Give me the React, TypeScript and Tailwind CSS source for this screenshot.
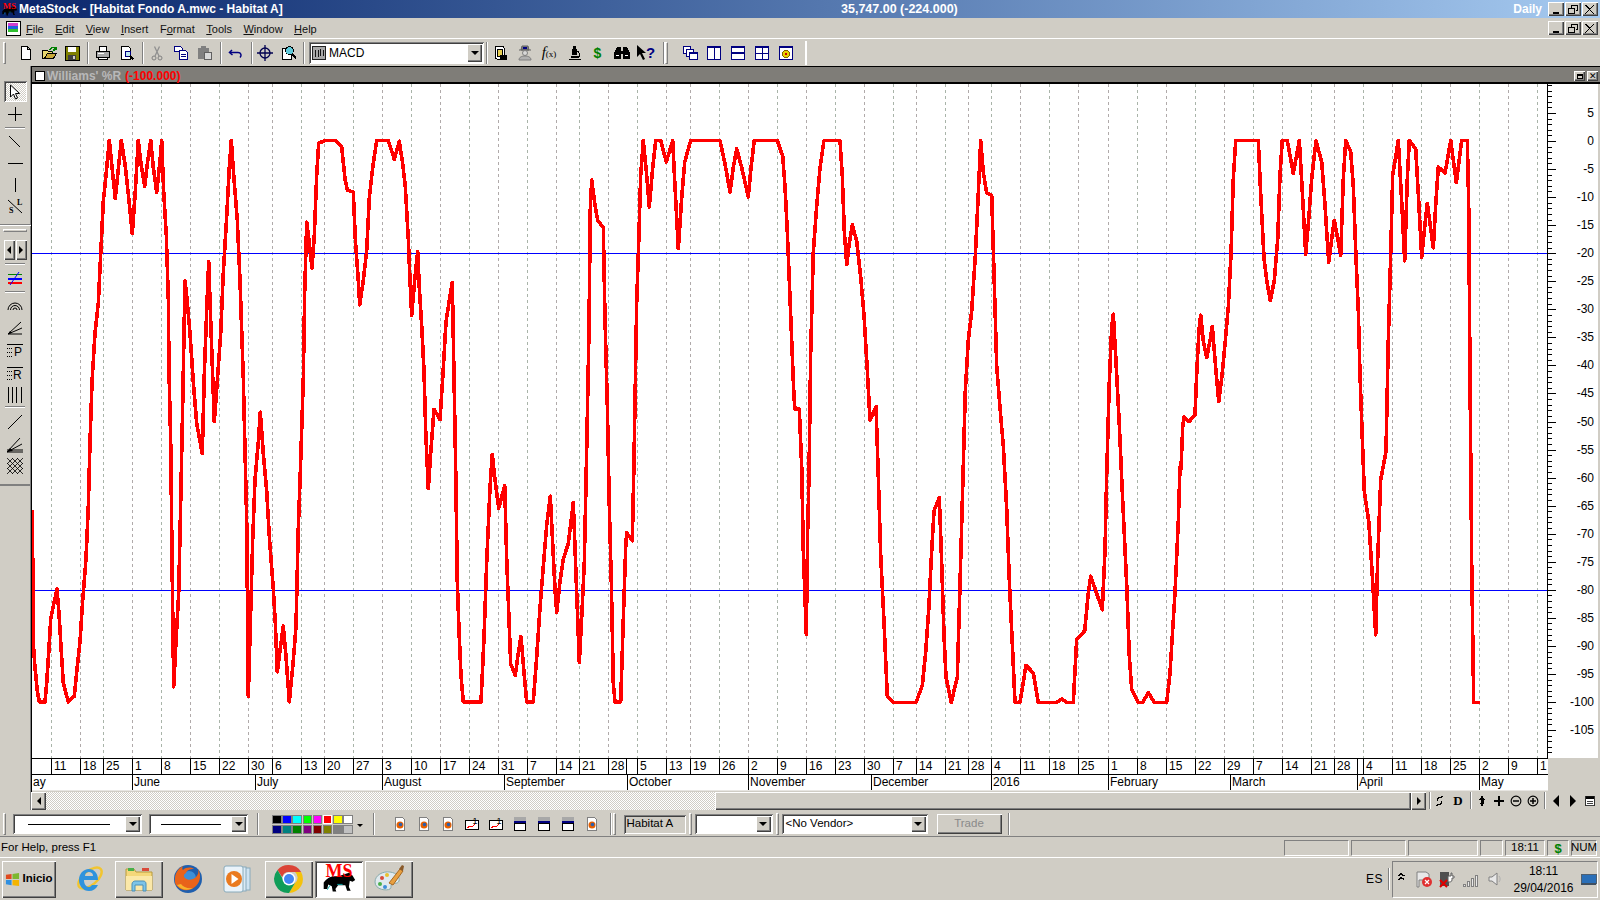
import type { ReactNode } from "react";

const raised = "shadow-[inset_1px_1px_0_#ffffff,inset_-1px_-1px_0_#404040,inset_-2px_-2px_0_#808080]";
const sunken = "shadow-[inset_1px_1px_0_#808080,inset_-1px_-1px_0_#ffffff,inset_2px_2px_0_#404040]";
const thinSunken = "border border-t-[#808080] border-l-[#808080] border-b-white border-r-white";

// curve read from the crops: x,y in zoomed pixels, mapped back to page pixels
const trace = (ox: number, k: number, pts: number[][]) => pts.map(([x, y]) => `${(ox + x / 3).toFixed(1)},${(130 + y / k).toFixed(1)}`).join(" ");

const curve = [
  trace(30, 2.658, [[7, 1010], [8, 1125], [9, 1350], [14, 1420], [22, 1490], [28, 1520], [45, 1520], [50, 1470], [56, 1390], [62, 1300], [70, 1265], [81, 1220], [87, 1285], [92, 1360], [100, 1470], [115, 1520], [133, 1505], [140, 1440], [150, 1360], [158, 1250], [168, 1140], [175, 1000], [180, 830], [186, 670], [195, 540], [205, 460], [212, 330], [220, 190], [228, 120], [238, 28], [245, 90], [256, 182], [263, 120], [274, 28], [285, 90], [296, 180], [307, 275], [315, 175], [325, 28], [333, 90], [344, 150], [352, 90], [362, 28], [370, 100], [380, 165], [389, 90], [395, 28], [401, 165], [409, 280], [415, 450], [417, 640], [422, 830], [427, 1200], [431, 1480], [438, 1360], [446, 1230], [452, 990], [458, 730], [465, 400], [470, 440], [480, 540], [490, 670], [500, 780], [517, 860], [523, 650], [530, 480], [536, 350], [543, 530], [553, 775], [560, 690], [572, 540], [580, 380], [590, 230], [598, 100], [604, 28], [612, 130], [622, 240], [630, 400], [640, 660], [645, 850], [650, 1040], [655, 1505], [662, 1280], [668, 1090], [675, 930], [685, 830], [691, 750], [700, 860], [710, 960], [718, 1080], [730, 1220], [736, 1310], [742, 1440], [752, 1370], [760, 1318], [768, 1400], [778, 1520], [790, 1410], [798, 1320], [805, 1060], [812, 880], [820, 660], [824, 430], [830, 245], [838, 300], [846, 368], [853, 280], [860, 120], [866, 35], [885, 28], [917, 28], [935, 45], [945, 130], [952, 160], [970, 165], [976, 290], [985, 400], [989, 465], [1000, 400], [1010, 320], [1018, 180], [1028, 100], [1040, 28], [1075, 28], [1093, 78], [1108, 30], [1118, 90], [1126, 150], [1135, 290], [1140, 400], [1145, 492], [1155, 390], [1163, 323]]),
  trace(410, 2.658, [[28, 420], [35, 520], [42, 640], [47, 800], [55, 953], [62, 860], [72, 742], [90, 770], [98, 660], [108, 510], [120, 440], [127, 405], [133, 700], [137, 900], [142, 1200], [147, 1330], [153, 1450], [160, 1520], [213, 1520], [222, 1350], [230, 1150], [240, 950], [247, 862], [255, 930], [266, 1005], [284, 945], [290, 1140], [297, 1300], [302, 1420], [316, 1450], [325, 1390], [333, 1346], [340, 1420], [350, 1520], [370, 1520], [380, 1400], [390, 1270], [400, 1160], [410, 1050], [421, 973], [428, 1100], [435, 1220], [440, 1282], [450, 1200], [460, 1140], [475, 1100], [483, 1040], [490, 990], [497, 1160], [503, 1300], [508, 1415], [516, 1280], [523, 1150], [530, 850], [537, 530], [541, 210], [545, 133], [555, 200], [563, 240], [580, 260], [585, 500], [592, 730], [598, 1000], [604, 1200], [610, 1470], [615, 1520], [632, 1520], [640, 1300], [647, 1110], [650, 1070], [667, 1092], [672, 880], [680, 460], [686, 300], [692, 120], [700, 28], [708, 100], [718, 205], [728, 100], [737, 28], [752, 28], [769, 85], [788, 28], [795, 150], [805, 315], [815, 180], [824, 85], [842, 28], [930, 28], [945, 90], [960, 165], [970, 100], [980, 50], [995, 100], [1015, 178], [1023, 100], [1033, 28], [1102, 28], [1118, 70], [1125, 150], [1132, 270], [1138, 400], [1145, 560], [1152, 710], [1155, 742], [1168, 742]]),
  trace(790, 2.376, [[35, 800], [40, 1000], [49, 1198], [53, 950], [57, 820], [62, 530], [70, 290], [80, 180], [90, 90], [102, 25], [150, 25], [157, 110], [163, 240], [170, 320], [178, 270], [187, 225], [200, 265], [212, 350], [222, 440], [232, 570], [240, 690], [258, 657], [264, 800], [272, 1010], [282, 1170], [292, 1345], [310, 1360], [378, 1360], [397, 1320], [407, 1240], [416, 1140], [425, 1000], [432, 905], [448, 873], [455, 1030], [462, 1200], [468, 1300], [484, 1360], [502, 1300], [510, 1080], [518, 850], [526, 620], [535, 500], [545, 430], [556, 300], [565, 150], [572, 25], [580, 100], [590, 150], [605, 155], [612, 340], [620, 560], [630, 660], [640, 750], [650, 900], [658, 1070], [668, 1240], [675, 1360], [690, 1360], [708, 1272], [730, 1290], [745, 1360], [800, 1360], [815, 1352], [830, 1360], [850, 1360], [860, 1210], [884, 1190], [895, 1100], [902, 1060], [937, 1140], [945, 1000], [950, 820], [958, 600], [965, 470], [970, 438], [978, 550], [988, 700], [998, 880], [1010, 1080], [1018, 1250], [1025, 1330], [1045, 1360], [1058, 1360], [1075, 1337], [1093, 1360], [1130, 1360], [1140, 1290], [1155, 1100], [1165, 930], [1170, 800]]),
  trace(1170, 2.658, [[33, 900], [38, 790], [42, 762], [57, 775], [75, 758], [80, 650], [87, 530], [92, 492], [100, 560], [110, 605], [120, 560], [127, 522], [135, 610], [146, 722], [155, 660], [165, 570], [175, 470], [183, 330], [190, 130], [197, 28], [265, 28], [272, 170], [282, 340], [290, 400], [301, 453], [313, 400], [323, 290], [330, 120], [337, 28], [352, 28], [370, 115], [388, 28], [396, 150], [407, 330], [415, 250], [425, 130], [438, 28], [455, 85], [465, 200], [476, 352], [485, 290], [493, 240], [512, 333], [520, 130], [527, 28], [542, 58], [550, 150], [558, 340], [565, 480], [570, 650], [577, 820], [583, 960], [596, 1040], [606, 1170], [617, 1342], [623, 1140], [632, 930], [648, 855], [655, 560], [662, 330], [668, 120], [685, 28], [695, 190], [704, 348], [712, 130], [718, 28], [737, 50], [745, 170], [755, 338], [765, 250], [772, 195], [790, 313], [797, 200], [805, 98], [825, 115], [842, 28], [859, 140], [875, 28], [892, 28], [896, 200], [900, 650], [905, 1150], [911, 1522], [930, 1522]]),
].join(" ");

const dates: [number, string][] = [[32, ""], [51, "11"], [80, "18"], [103, "25"], [132, "1"], [161, "8"], [190, "15"], [219, "22"], [248, "30"], [272, "6"], [301, "13"], [324, "20"], [353, "27"], [382, "3"], [411, "10"], [440, "17"], [469, "24"], [498, "31"], [527, "7"], [556, "14"], [579, "21"], [608, "28"], [626, ""], [637, "5"], [666, "13"], [690, "19"], [719, "26"], [748, "2"], [777, "9"], [806, "16"], [835, "23"], [864, "30"], [893, "7"], [916, "14"], [945, "21"], [968, "28"], [991, "4"], [1020, "11"], [1049, "18"], [1078, "25"], [1108, "1"], [1137, "8"], [1166, "15"], [1195, "22"], [1224, "29"], [1253, "7"], [1282, "14"], [1311, "21"], [1334, "28"], [1357, ""], [1363, "4"], [1392, "11"], [1421, "18"], [1450, "25"], [1479, "2"], [1508, "9"], [1537, "1"], [1547, ""]];
const months: [number, string][] = [[32, "ay"], [132, "June"], [255, "July"], [382, "August"], [504, "September"], [627, "October"], [748, "November"], [871, "December"], [991, "2016"], [1108, "February"], [1230, "March"], [1357, "April"], [1479, "May"], [1548, ""]];
const gridX = dates.filter((d) => d[1] !== "").map((d) => d[0]);

const axisY = (v: number) => 141 - v * 5.61;
const axisLabels = Array.from({ length: 23 }, (_, i) => 5 - i * 5);
const minorTicks = Array.from({ length: 120 }, (_, i) => 84 + ((141 - 84) % 5.61) + i * 5.61).filter((y) => y < 758);

const Ico = ({ children, s = 16, box = 16, crisp = true }: { children: ReactNode; s?: number; box?: number; crisp?: boolean }) => (
  <svg width={s} height={s} viewBox={`0 0 ${box} ${box}`} shapeRendering={crisp ? "crispEdges" : "geometricPrecision"} className="shrink-0">
    {children}
  </svg>
);

const Sep = ({ cls = "mx-[2px]" }: { cls?: string }) => <div className={`w-[2px] h-[22px] border-l border-l-[#808080] border-r border-r-white shrink-0 ${cls}`} />;
const Grip = ({ cls = "" }: { cls?: string }) => <div className={`w-[3px] h-[22px] border border-t-white border-l-white border-r-[#808080] border-b-[#808080] shrink-0 ${cls}`} />;

const ArrowDown = () => <div className="w-0 h-0 border-l-[4px] border-r-[4px] border-t-[4px] border-l-transparent border-r-transparent border-t-black" />;

const Combo = ({ w, children }: { w: string; children?: ReactNode }) => (
  <div className={`${w} ${sunken} h-[20px] bg-white flex items-center pl-[4px] pr-[2px] shrink-0`}>
    <div className="flex-1 flex items-center min-w-0">{children}</div>
    <div className={`${raised} w-[15px] h-[16px] bg-[#d0cdc5] flex items-center justify-center`}><ArrowDown /></div>
  </div>
);

const CapBtn = ({ kind }: { kind: "min" | "max" | "close" }) => (
  <div className={`${raised} w-[16px] h-[14px] bg-[#d0cdc5] flex items-center justify-center shrink-0`}>
    <svg width="10" height="9" viewBox="0 0 10 9" shapeRendering="crispEdges">
      {kind === "min" && <rect x="2" y="7" width="6" height="2" fill="#000" />}
      {kind === "max" && <path d="M3.500 2.500V.5h6v5h-2M.5 3.500h6v5h-6zM.5 3.500h6" fill="none" stroke="#000" />}
      {kind === "close" && <path d="M1 0l3.500 3.500L8 0h1.500L5.300 4.500 9.500 9H8L4.500 5.300 1 9H0l3.700-4.500L0 0z" fill="#000" />}
    </svg>
  </div>
);

const LogoBull = ({ s }: { s: number }) => (
  <svg width={s} height={s} viewBox="0 0 40 36" className="shrink-0">
    <path d="M3 22c3-4 7-7 12-7 6 0 12-3 16-4l4 3 3 5-3 2-3-1-1 7 2 4h-4l-2-6-8 0-3 4 1 3h-4l-1-6-4-2-1 5H3z" fill="#000" />
    <path d="M7 30l3-5M18 24h6" stroke="#0aa" strokeWidth="1" fill="none" />
    <text x="20" y="16" textAnchor="middle" fontFamily="'Liberation Serif',serif" fontWeight="700" fontSize="20" fill="#f00">MS</text>
  </svg>
);

const menus = [["F", "ile"], ["E", "dit"], ["V", "iew"], ["I", "nsert"], ["F", "ormat", "o"], ["T", "ools"], ["W", "indow"], ["H", "elp"]];

const Tool = ({ children, w = "w-[24px]" }: { children: ReactNode; w?: string }) => <div className={`${w} flex items-center justify-center shrink-0`}>{children}</div>;

const FoxDoc = () => (
  <Ico>
    <path d="M3.500 1.500h7l2 2v11h-9z" fill="#fff" stroke="#808080" />
    <circle cx="8" cy="9" r="3.500" fill="#e66000" shapeRendering="geometricPrecision" />
    <circle cx="8.500" cy="8.500" r="1.800" fill="#2b5fae" shapeRendering="geometricPrecision" />
  </Ico>
);
const ChartOne = () => (
  <Ico>
    <path d="M1.500 4.500h13v9h-13z" fill="#fff" stroke="#000" />
    <path d="M3 12l3-2 2 1 3-3" fill="none" stroke="#f00" />
    <text x="8.500" y="8" fontSize="9" fill="#000" fontFamily="'Liberation Sans',sans-serif">1</text>
  </Ico>
);
const WinPane = () => (
  <Ico>
    <rect x="2" y="1" width="12" height="4" fill="#a8a8a8" />
    <rect x="2" y="5" width="12" height="2" fill="#000080" />
    <path d="M2.500 7.500h11v7h-11z" fill="#fff" stroke="#000" />
  </Ico>
);
const BlueWin = ({ children }: { children: ReactNode }) => (
  <Ico>
    <path d="M1.500 1.500h13v13h-13z" fill="#fff" stroke="#000080" />
    <rect x="1" y="1" width="14" height="2" fill="#000080" />
    {children}
  </Ico>
);

const leftStroke = "#000";

const Hr = ({ cls = "" }: { cls?: string }) => <div className={`w-[20px] h-[2px] bg-[#808080] border-b border-b-white mx-auto shrink-0 ${cls}`} />;

const TaskBtn = ({ children, pressed = false }: { children: ReactNode; pressed?: boolean }) => (
  <div className={`w-[48px] h-[37px] flex items-center justify-center shrink-0 ${pressed ? `${sunken} bg-white` : raised}`}>{children}</div>
);

const App = () => {
  return (
    <div className="w-[1600px] h-[900px] overflow-hidden flex flex-col bg-[#d0cdc5] text-black text-[12px] leading-none font-['Liberation_Sans',Arial,sans-serif] select-none">
      {/* title bar */}
      <div className="h-[18px] shrink-0 flex items-center bg-gradient-to-r from-[#0a246a] to-[#a6caf0] text-white font-bold text-[12.500px] pr-[2px]">
        <div className="w-[19px] flex justify-center"><LogoBull s={17} /></div>
        <div className="w-[822px] whitespace-nowrap text-[12px]">MetaStock - [Habitat Fondo A.mwc - Habitat A]</div>
        <div className="whitespace-nowrap">35,747.00 (-224.000)</div>
        <div className="flex-1 text-right pr-[6px] text-[12px]">Daily</div>
        <div className="flex gap-[1px]"><CapBtn kind="min" /><CapBtn kind="max" /><CapBtn kind="close" /></div>
      </div>

      {/* menu */}
      <div className="h-[21px] shrink-0 flex items-center border-b border-b-white pr-[2px]">
        <div className="w-[26px] flex justify-center">
          <Ico>
            <rect x="1" y="1" width="14" height="14" fill="#fff" stroke="#000" />
            <rect x="3" y="3" width="10" height="3" fill="#d040d0" />
            <rect x="3" y="6" width="10" height="3" fill="#2060e0" />
            <rect x="3" y="9" width="10" height="3" fill="#30c030" />
          </Ico>
        </div>
        <div className="flex gap-[11.500px] text-[11px] pt-[2px] flex-1 text-[#111]">
          {menus.map(([a, b, c]) => (
            <span key={a + b} className="whitespace-nowrap">
              {c ? <>{a}<span className="underline">{c}</span>{b.slice(1)}</> : <><span className="underline">{a}</span>{b}</>}
            </span>
          ))}
        </div>
        <div className="flex gap-[1px]"><CapBtn kind="min" /><CapBtn kind="max" /><CapBtn kind="close" /></div>
      </div>

      {/* main toolbar */}
      <div className="h-[27px] shrink-0 flex items-center pl-[3px]">
        <Grip cls="mr-[8px]" />
        <Tool w="w-[23px]"><Ico><path d="M3.500 1.500h6l3 3v10h-9zM9.500 1.500v3h3" fill="#fff" stroke="#000" /></Ico></Tool>
        <Tool w="w-[23px]"><Ico><path d="M1.500 5.500h5l1 1h4v7h-10z" fill="#e8d870" stroke="#000" /><path d="M3.500 13.500l3-5h9l-3 5z" fill="#c8a838" stroke="#000" /><path d="M9 5c1-3 3-3 5-2l-1 2 2-1 0-2" fill="none" stroke="#008000" strokeWidth="1.500" /></Ico></Tool>
        <Tool><Ico><rect x="1" y="1" width="14" height="14" fill="#808000" stroke="#000" /><rect x="4" y="2" width="8" height="5" fill="#fff" /><rect x="4" y="10" width="8" height="5" fill="#404040" /><rect x="9" y="11" width="2" height="3" fill="#d0cdc5" /></Ico></Tool>
        <Sep cls="ml-[3px] mr-[2px]" />
        <Tool><Ico><path d="M4.500 1.500h7v5h-7z" fill="#fff" stroke="#000" /><path d="M1.500 6.500h13v6h-13z" fill="#a8a8a8" stroke="#000" /><path d="M3.500 12.500h9v2h-9z" fill="#fff" stroke="#000" /><path d="M3 8.500h6" stroke="#fff" /></Ico></Tool>
        <Tool><Ico><path d="M2.500 1.500h7l2 2v11h-9z" fill="#fff" stroke="#000" /><circle cx="9" cy="9" r="3" fill="#bfe8f0" stroke="#000080" /><path d="M11 11l3.500 3.500" stroke="#000" strokeWidth="2" /></Ico></Tool>
        <Sep cls="ml-[3px] mr-[1px]" />
        <Tool><Ico crisp={false}><circle cx="5" cy="13" r="2" fill="none" stroke="#808080" /><circle cx="11" cy="13" r="2" fill="none" stroke="#808080" /><path d="M6 11L10.500 1.500M10 11L5.500 1.500" stroke="#909090" strokeWidth="1.300" /></Ico></Tool>
        <Tool><Ico><path d="M1.500 1.500h6l2 2v3h-8z" fill="#fff" stroke="#000080" /><path d="M6.500 5.500h6l2 2v7h-8z" fill="#fff" stroke="#000080" /><path d="M8 9h5M8 11h5" stroke="#000080" /></Ico></Tool>
        <Tool><Ico><rect x="1" y="3" width="11" height="11" fill="#808080" /><rect x="4" y="1" width="5" height="3" fill="#808080" /><path d="M7.500 7.500h7v7h-7z" fill="#d8d8d8" stroke="#606060" /></Ico></Tool>
        <Sep cls="ml-[3px] mr-[2px]" />
        <Tool><Ico crisp={false}><path d="M4 5l-2.500 2.500L4.500 10" fill="none" stroke="#000080" strokeWidth="1.500" /><path d="M2 7.500h8c3 0 4 3 2 5" fill="none" stroke="#000080" strokeWidth="1.500" /></Ico></Tool>
        <Sep cls="ml-[3px] mr-[0px]" />
        <Tool><Ico crisp={false}><circle cx="8" cy="8" r="5" fill="none" stroke="#000050" strokeWidth="1.300" /><path d="M8 0v16M0 8h16" stroke="#000050" strokeWidth="1.300" /></Ico></Tool>
        <Tool><Ico><path d="M1.500 3.500h7l2 2v9h-9z" fill="#fff" stroke="#000" /><circle cx="8.500" cy="5.500" r="4" fill="#60c8d8" stroke="#000" /><path d="M11 8.500l4 5" stroke="#000" strokeWidth="2" /></Ico></Tool>
        <Sep cls="ml-[2px] mr-[4px]" />
        <div className={`${sunken} w-[175px] h-[22px] bg-white flex items-center pl-[3px] pr-[2px] shrink-0`}>
          <div className="mr-[3px]"><Ico s={14}><rect x="1" y="1" width="14" height="14" fill="#a8a8a8" stroke="#000" /><path d="M4 5v8M7 4v8M10 3v8M13 4v7" stroke="#000" /></Ico></div>
          <div className="flex-1 text-[12px]">MACD</div>
          <div className={`${raised} w-[15px] h-[18px] bg-[#d0cdc5] flex items-center justify-center`}><ArrowDown /></div>
        </div>
        <Sep cls="ml-[2px] mr-[0px]" />
        <Tool w="w-[24px]"><Ico><rect x="3" y="1" width="9" height="13" rx="2" fill="#fff" stroke="#000" /><rect x="5" y="4" width="5" height="7" fill="#e8d050" stroke="#000" /><rect x="8" y="10" width="7" height="5" fill="#000" /></Ico></Tool>
        <Tool w="w-[25px]"><Ico crisp={false}><path d="M4 5h8l-1-4H5zM2 5h12" fill="#808080" stroke="#606060" /><rect x="6" y="2" width="4" height="2" fill="#000080" /><circle cx="8" cy="8" r="2.500" fill="#d8d8d8" stroke="#808080" /><path d="M2 15c0-3 3-4 6-4s6 1 6 4z" fill="#b0b0b0" stroke="#808080" /></Ico></Tool>
        <Tool w="w-[24px]"><span className="font-['Liberation_Serif',serif] italic text-[15px]">f<span className="text-[9px] not-italic">(x)</span></span></Tool>
        <Tool w="w-[25px]"><Ico><path d="M7 1h3v3h1v6h-5V4h1z" fill="#000" /><path d="M3 15h12v-1H3zM5 13h8v-2H5z" fill="#000" /><path d="M11 6c3 1 3 5 1 7" fill="none" stroke="#000" /></Ico></Tool>
        <Tool w="w-[23px]"><span className="text-[#008000] font-bold text-[14px]">$</span></Tool>
        <Tool w="w-[25px]"><Ico><path d="M0 14V8l3-6h4v4h2V2h4l3 6v6H9V9H7v5z" fill="#000" /><path d="M2 10h3M11 10h3" stroke="#fff" /></Ico></Tool>
        <Tool w="w-[24px]"><div className="flex items-center"><svg width="10" height="15" viewBox="0 0 10 15"><path d="M0 0l9 8H5l3 6-2 1-3-6-3 3z" fill="#000" /></svg><span className="text-[#000080] font-bold text-[15px] -ml-[1px]">?</span></div></Tool>
        <Sep cls="ml-[5px] mr-[0px]" />
        <Grip cls="mr-[10px]" />
        <Tool><Ico><path d="M1.500 1.500h7v7h-7z" fill="#fff" stroke="#000080" /><path d="M4.500 4.500h7v7h-7z" fill="#fff" stroke="#000080" /><path d="M7.500 7.500h8v7h-8z" fill="#fff" stroke="#000080" /><rect x="7" y="7" width="9" height="2" fill="#000080" /></Ico></Tool>
        <Tool><BlueWin><path d="M8 2v12" stroke="#000080" /></BlueWin></Tool>
        <Tool><BlueWin><rect x="1" y="7" width="14" height="2" fill="#000080" /></BlueWin></Tool>
        <Tool><BlueWin><path d="M8 2v12M2 8h12" stroke="#000080" /></BlueWin></Tool>
        <Tool><BlueWin><circle cx="8" cy="9" r="3.500" fill="#e8d000" stroke="#806000" /><circle cx="8" cy="9" r="1" fill="#c00" /></BlueWin></Tool>
        <div className="w-[2px] h-[24px] bg-white ml-[7px]" />
      </div>

      {/* workspace */}
      <div className="h-[744px] shrink-0 flex">
        {/* drawing tools */}
        <div className="w-[31px] shrink-0 border-r border-r-[#808080] flex flex-col items-center pt-[15px]">
          <div className={`${sunken} w-[23px] h-[21px] flex items-center justify-center shrink-0 bg-[repeating-conic-gradient(#ffffff_0_25%,#d0cdc5_0_50%)] bg-[length:2px_2px]`}>
            <svg width="12" height="16" viewBox="0 0 12 16"><path d="M1.500 1v12l3-3 2 5 2-1-2-4.500h4z" fill="#fff" stroke="#000" /></svg>
          </div>
          <div className="mt-[1px] h-[21px] flex items-center"><Ico><path d="M8 1v14M1 8h14" stroke={leftStroke} /></Ico></div>
          <Hr cls="mt-[3px]" />
          <div className="mt-[3px] h-[20px] flex items-center"><Ico crisp={false}><path d="M2 2l11 11" stroke={leftStroke} /></Ico></div>
          <div className="h-[21px] flex items-center"><Ico><path d="M1 8h15" stroke={leftStroke} /></Ico></div>
          <div className="mt-[1px] h-[21px] flex items-center"><Ico><path d="M8 1v14" stroke={leftStroke} /></Ico></div>
          <div className="h-[22px] flex items-center">
            <Ico crisp={false}><path d="M1 2l14 13" stroke={leftStroke} /><text x="10" y="7" fontSize="8" fontWeight="700" fontFamily="'Liberation Serif',serif">L</text><text x="2" y="15" fontSize="8" fontWeight="700" fontFamily="'Liberation Serif',serif">S</text></Ico>
          </div>
          <div className="w-[31px] h-[2px] bg-[#808080] border-b border-b-white mt-[7px] shrink-0" />
          <div className="w-[24px] h-[3px] mt-[3px] border border-t-white border-l-white border-r-[#808080] border-b-[#808080] shrink-0" />
          <div className="flex gap-[1px] mt-[8px] shrink-0">
            <div className={`${raised} w-[11px] h-[20px] flex items-center justify-center`}><div className="w-0 h-0 border-y-[4px] border-y-transparent border-r-[4px] border-r-black" /></div>
            <div className={`${raised} w-[11px] h-[20px] flex items-center justify-center`}><div className="w-0 h-0 border-y-[4px] border-y-transparent border-l-[4px] border-l-black" /></div>
          </div>
          <Hr cls="mt-[3px]" />
          <div className="mt-[4px] h-[20px] flex items-center"><Ico><rect x="1" y="3" width="14" height="1" fill="#008000" /><rect x="1" y="7" width="14" height="2" fill="#0000ff" /><rect x="1" y="11" width="14" height="2" fill="#ff0000" /><path d="M3 14L12 1" stroke="#0000ff" shapeRendering="geometricPrecision" /></Ico></div>
          <Hr cls="mt-[2px]" />
          <div className="mt-[2px] h-[19px] flex items-center"><Ico crisp={false}><path d="M1 13a7 7 0 0 1 14 0M3.500 13a4.500 4.500 0 0 1 9 0M6 13a2 2 0 0 1 4 0" fill="none" stroke={leftStroke} /></Ico></div>
          <div className="mt-[4px] h-[20px] flex items-center"><Ico crisp={false}><path d="M1 14L14 2M1 14l14-6M1 14h14" stroke={leftStroke} /><path d="M1 14l4-1-2-2z" fill="#000" /></Ico></div>
          <div className="mt-[2px] h-[20px] flex items-center"><Ico><path d="M0 2h16" stroke="#000" /><path d="M0 6h5M0 10h5M0 14h5" stroke="#000" strokeDasharray="1 1" /><text x="7" y="14" fontSize="12" fontFamily="'Liberation Sans',sans-serif">P</text></Ico></div>
          <div className="mt-[3px] h-[20px] flex items-center"><Ico><path d="M0 2h16" stroke="#000" /><path d="M0 6h5M0 10h5M0 14h5" stroke="#000" strokeDasharray="1 1" /><text x="6" y="14" fontSize="12" fontFamily="'Liberation Sans',sans-serif">R</text></Ico></div>
          <div className="mt-[2px] h-[20px] flex items-center"><Ico><path d="M1.500 0v16M5.500 0v16M9.500 0v16M14.500 0v16" stroke="#000" /></Ico></div>
          <Hr cls="mt-[1px]" />
          <div className="mt-[4px] h-[20px] flex items-center"><Ico crisp={false}><path d="M1 15L15 1" stroke={leftStroke} /></Ico></div>
          <div className="mt-[3px] h-[20px] flex items-center"><Ico crisp={false}><path d="M0 15L13 1M0 15l15-8M0 15h16M0 13h16" stroke={leftStroke} /><path d="M0 15l6-1-3-3z" fill="#000" /></Ico></div>
          <div className="mt-[1px] h-[20px] flex items-center"><Ico crisp={false}><path d="M0 0l16 16M5 0l11 11M10 0l6 6M0 5l11 11M0 10l6 6M16 0L0 16M11 0L0 11M6 0L0 6M16 5L5 16M16 10l-6 6" stroke="#000" strokeWidth=".8" /></Ico></div>
          <div className="w-[31px] h-[2px] bg-[#808080] mt-[8px] shrink-0" />
        </div>

        {/* chart window */}
        <div className="flex-1 flex flex-col border-l border-l-black min-w-0">
          <div className="h-[18px] shrink-0 flex items-center border-t border-t-black border-b-2 border-b-black bg-[#7f7d78] pr-[2px] pt-[3px] font-bold text-[12px]">
            <div className="w-[10px] h-[10px] bg-white border border-black ml-[3px] mr-[2px] shrink-0" />
            <span className="text-[#b8b8b8] whitespace-nowrap">Williams' %R</span>
            <span className="text-[#ff0000] whitespace-nowrap ml-[4px]">(-100.000)</span>
            <div className="flex-1" />
            <div className="flex gap-[2px]">
              <div className={`${raised} w-[11px] h-[10px] bg-[#d0cdc5] flex items-center justify-center`}><div className="w-[6px] h-[5px] border border-black border-t-2" /></div>
              <div className={`${raised} w-[11px] h-[10px] bg-[#d0cdc5] flex items-center justify-center text-[9px] font-normal`}>✕</div>
            </div>
          </div>

          <div className="h-[674px] shrink-0 flex">
            <svg width="1566" height="674" viewBox="32 84 1566 674" className="block bg-white shrink-0">
              {gridX.map((x) => (
                <path key={x} d={`M${x + 0.5} 84V758`} stroke={x % 2 ? "#a9b4a9" : "#b0aaaa"} strokeDasharray="3 3" shapeRendering="crispEdges" />
              ))}
              <path d="M32 253.500H1547M32 590.500H1547" stroke="#0000ff" shapeRendering="crispEdges" />
              <polyline points={curve} fill="none" stroke="#ff0000" strokeWidth="3.600" strokeLinejoin="round" shapeRendering="crispEdges" />
              <path d="M1547.500 84V758" stroke="#000" strokeWidth="1.500" shapeRendering="crispEdges" />
              {minorTicks.map((y) => (
                <path key={y} d={`M1548 ${Math.round(y) + 0.5}H1552`} stroke="#000" shapeRendering="crispEdges" />
              ))}
              {axisLabels.map((v) => (
                <g key={v}>
                  <path d={`M1548 ${Math.round(axisY(v)) + 0.5}H1556`} stroke="#000" shapeRendering="crispEdges" />
                  <text x="1594" y={axisY(v) + 4} textAnchor="end" fontSize="12" fill="#000">{v}</text>
                </g>
              ))}
            </svg>
          </div>

          <div className="flex items-start shrink-0">
            <div className="flex flex-col shrink-0">
              <div className="h-[17px] flex bg-white border-t border-t-black border-b border-b-black">
                {dates.slice(0, -1).map(([x, label], i) => (
                  <div key={x} style={{ width: dates[i + 1][0] - x }} className="border-l border-l-black pl-[2px] text-[12px] leading-[15px] whitespace-nowrap overflow-hidden first:border-l-0">{label}</div>
                ))}
              </div>
              <div className="h-[16px] flex bg-white border-b border-b-[#e8e6e2]">
                {months.slice(0, -1).map(([x, label], i) => (
                  <div key={x} style={{ width: months[i + 1][0] - x }} className="border-l border-l-black pl-[1px] text-[12px] leading-[15px] whitespace-nowrap overflow-hidden first:border-l-0">{label}</div>
                ))}
              </div>
            </div>
          </div>

          {/* scroll row */}
          <div className="h-[19px] shrink-0 flex items-center -ml-[1px]">
            <div className={`${raised} w-[15px] h-[18px] flex items-center justify-center shrink-0`}><div className="w-0 h-0 border-y-[4px] border-y-transparent border-r-[4px] border-r-black" /></div>
            <div className="w-[669px] h-[18px] shrink-0 bg-[repeating-conic-gradient(#ffffff_0_25%,#d0cdc5_0_50%)] bg-[length:2px_2px]" />
            <div className={`${raised} w-[696px] h-[18px] shrink-0`} />
            <div className={`${raised} w-[15px] h-[18px] flex items-center justify-center shrink-0`}><div className="w-0 h-0 border-y-[4px] border-y-transparent border-l-[4px] border-l-black" /></div>
            <div className="w-[2px] h-[17px] ml-[3px] border-l border-l-[#808080] border-r border-r-white shrink-0" />
            <Tool w="w-[17px] ml-[1px]"><Ico s={12}><path d="M7 1h4l-2 3zM5 15H1l2-3z" fill="#000" /><path d="M8 3C4 3 3 5 3 8M4 13c4 0 5-2 5-5" fill="none" stroke="#000" strokeWidth="2" /></Ico></Tool>
            <Tool w="w-[18px]"><span className="font-['Liberation_Serif',serif] font-bold text-[13px]">D</span></Tool>
            <div className="w-[2px] h-[17px] ml-[3px] border-l border-l-[#808080] border-r border-r-white shrink-0" />
            <Tool w="w-[17px] ml-[1px]"><Ico s={12}><path d="M8 1l4 5H4zM8 15l4-5H4z" fill="#000" /><rect x="6" y="5" width="4" height="6" fill="#000" /></Ico></Tool>
            <Tool w="w-[17px]"><Ico s={12}><path d="M8 0l2 3H6zM8 16l2-3H6zM0 8l3-2v4zM16 8l-3-2v4zM7 3h2v10H7zM3 7h10v2H3z" fill="#000" /></Ico></Tool>
            <Tool w="w-[17px]"><Ico s={12} crisp={false}><circle cx="8" cy="8" r="6.500" fill="none" stroke="#000" strokeWidth="1.500" /><path d="M4 8h8" stroke="#000" strokeWidth="2" /></Ico></Tool>
            <Tool w="w-[17px]"><Ico s={12} crisp={false}><circle cx="8" cy="8" r="6.500" fill="none" stroke="#000" strokeWidth="1.500" /><path d="M4 8h8M8 4v8" stroke="#000" strokeWidth="2" /></Ico></Tool>
            <div className="w-[2px] h-[17px] ml-[3px] border-l border-l-[#808080] border-r border-r-white shrink-0" />
            <Tool w="w-[17px] ml-[1px]"><div className="w-0 h-0 border-y-[6px] border-y-transparent border-r-[6px] border-r-black" /></Tool>
            <Tool w="w-[17px]"><div className="w-0 h-0 border-y-[6px] border-y-transparent border-l-[6px] border-l-black" /></Tool>
            <Tool w="w-[17px]"><Ico s={12}><path d="M2.500 1.500h11v13h-11z" fill="#fff" stroke="#000" /><path d="M3 2h10v3H3zM4 8h8M4 11h8" stroke="#000" /></Ico></Tool>
          </div>
        </div>
      </div>

      {/* lower toolbar */}
      <div className="h-[27px] shrink-0 flex items-center pl-[3px] pt-[2px] border-b border-b-[#808080]">
        <Grip cls="mr-[7px]" />
        <Combo w="w-[129px]"><div className="h-[1px] w-[82px] bg-black ml-[11px]" /></Combo>
        <div className="w-[7px]" />
        <Combo w="w-[99px]"><div className="h-[1px] w-[60px] bg-black ml-[8px]" /></Combo>
        <Sep cls="ml-[9px] mr-[1px]" />
        <div className="grid grid-cols-[repeat(8,10.200px)] ml-[12px] gap-y-[1px]">
          {["bg-[#000000]", "bg-[#0000ff]", "bg-[#00ffff]", "bg-[#00ff00]", "bg-[#ff00ff]", "bg-[#ff0000]", "bg-[#ffff00]", "bg-[#ffffff]", "bg-[#000080]", "bg-[#008080]", "bg-[#008000]", "bg-[#800080]", "bg-[#800000]", "bg-[#808000]", "bg-[#808080]", "bg-[#c0c0c0]"].map((c, i) => (
            <div key={c} className={`${c} w-[9.500px] h-[9px] border ${i === 5 ? "border-white" : "border-[#808080]"}`} />
          ))}
        </div>
        <div className="ml-[3px] mt-[3px]"><div className="w-0 h-0 border-l-[3px] border-r-[3px] border-t-[3px] border-l-transparent border-r-transparent border-t-black" /></div>
        <Sep cls="ml-[10px] mr-[13px]" />
        <Tool><FoxDoc /></Tool>
        <Tool><FoxDoc /></Tool>
        <Tool><FoxDoc /></Tool>
        <Tool><ChartOne /></Tool>
        <Tool><ChartOne /></Tool>
        <Tool><WinPane /></Tool>
        <Tool><WinPane /></Tool>
        <Tool><WinPane /></Tool>
        <Tool><FoxDoc /></Tool>
        <Sep cls="ml-[6px] mr-[1px]" />
        <Grip cls="mr-[8px]" />
        <div className={`${sunken} w-[62px] h-[19px] flex items-center pl-[3px] text-[11.500px] whitespace-nowrap shrink-0`}>Habitat A</div>
        <Grip cls="mx-[3px]" />
        <Combo w="w-[78px]" />
        <Grip cls="mx-[3px]" />
        <Combo w="w-[146px]"><span className="text-[11.500px] whitespace-nowrap">&lt;No Vendor&gt;</span></Combo>
        <div className="w-[9px]" />
        <div className={`${raised} w-[65px] h-[20px] flex items-center justify-center text-[#8a8a8a] text-[11.500px] shrink-0`}>Trade</div>
        <Sep cls="ml-[6px]" />
      </div>

      {/* status */}
      <div className="h-[21px] shrink-0 flex items-center pl-[1px] pr-[3px] pt-[2px] border-b border-b-white text-[11.500px]">
        <div className="flex-1 whitespace-nowrap">For Help, press F1</div>
        <div className="flex gap-[2px] h-[16px]">
          <div className={`${thinSunken} w-[65px]`} />
          <div className={`${thinSunken} w-[55px]`} />
          <div className={`${thinSunken} w-[70px]`} />
          <div className={`${thinSunken} w-[23px]`} />
          <div className={`${thinSunken} w-[40px] flex items-center justify-center`}>18:11</div>
          <div className={`${thinSunken} w-[22px] flex items-center justify-center text-[#008000] font-bold text-[13px]`}>$</div>
          <div className={`${thinSunken} w-[26px] flex items-center justify-center`}>NUM</div>
        </div>
      </div>

      {/* taskbar */}
      <div className="flex-1 flex items-center pl-[2px] pr-[2px]">
        <div className={`${raised} w-[54px] h-[37px] flex items-center justify-center gap-[2px] font-bold text-[11.500px] shrink-0`}>
          <Ico s={15} crisp={false}><path d="M1 3l6-1v5.500H1z" fill="#e04a1f" /><path d="M8 2l7-1v6.500H8z" fill="#7cb82f" /><path d="M1 8.500h6V14l-6-1z" fill="#2f8fe0" /><path d="M8 8.500h7V15l-7-1z" fill="#f4b400" /></Ico>
          Inicio
        </div>
        <div className="w-[59px] flex justify-center pl-[6px] shrink-0">
          <Ico s={32} box={32} crisp={false}>
            <ellipse cx="17" cy="15" rx="14" ry="7" fill="none" stroke="#f2c530" strokeWidth="2.500" transform="rotate(-40 17 15)" />
            <path d="M6 17h19c0-7-4-11-9-11C10 6 6 11 6 17s4 11 10 11c4 0 7-2 9-6h-6c-1 1-2 2-3 2-3 0-5-3-5-7zM12 13c0-3 2-4 4-4s4 1 4 4z" fill="#2f93dd" fillRule="evenodd" />
          </Ico>
        </div>
        <TaskBtn>
          <Ico s={32} box={32} crisp={false}>
            <path d="M3 6h8l2 3h16v18H3z" fill="#f4d77a" stroke="#b89a3a" />
            <path d="M5 5h6v3H5z" fill="#49b04a" /><path d="M19 5h7v3h-7z" fill="#d94a3a" />
            <path d="M3 13h26v14H3z" fill="#fbe8a8" />
            <path d="M9 28v-7c0-2 2-3 3-3h8c2 0 3 1 3 3v7h-3v-6h-8v6z" fill="#7cc4e8" stroke="#4a90b8" />
          </Ico>
        </TaskBtn>
        <div className="w-[50px] flex justify-center shrink-0">
          <Ico s={32} box={32} crisp={false}>
            <circle cx="16" cy="16" r="14" fill="#1f5fae" />
            <circle cx="17" cy="15" r="7" fill="#3d8fd8" />
            <path d="M3 19C2 10 7 5 11 3c-1 2-1 3 0 4 3-3 8-3 11-1-4 0-7 1-8 4-2 1-3 3-1 5 3 3 8 2 11-1 2-2 3-5 2-8 3 5 3 12-2 17-5 5-13 6-18 1-2-2-3-3-3-5z" fill="#e8631a" />
            <path d="M5 22c4 5 11 6 16 3-5 1-10-1-12-4z" fill="#f7b32b" />
          </Ico>
        </div>
        <div className="w-[48px] flex justify-center shrink-0">
          <Ico s={32} box={32} crisp={false}>
            <rect x="18" y="5" width="11" height="22" fill="#cfe3f2" stroke="#8ab" />
            <rect x="14" y="4" width="11" height="24" fill="#dbeaf5" stroke="#8ab" />
            <rect x="3" y="3" width="19" height="26" rx="2" fill="#eaf3fa" stroke="#8ab" />
            <circle cx="13" cy="16" r="8" fill="#ea7a1f" />
            <path d="M10.500 11l7 5-7 5z" fill="#fff" />
          </Ico>
        </div>
        <div className="w-[4px] shrink-0" />
        <TaskBtn>
          <Ico s={32} box={32} crisp={false}>
            <path d="M16 2a14 14 0 0 1 12.100 7H16a7 7 0 0 0-6.800 5.200L4.500 7A14 14 0 0 1 16 2z" fill="#db4437" />
            <path d="M28.100 9A14 14 0 0 1 16 30l6-10a7 7 0 0 0 0-11z" fill="#f4c20d" />
            <path d="M16 30A14 14 0 0 1 4.500 7l6.500 11a7 7 0 0 0 11 2l-6 10z" fill="#0f9d58" />
            <circle cx="16" cy="16" r="6.500" fill="#fff" />
            <circle cx="16" cy="16" r="5" fill="#4285f4" />
          </Ico>
        </TaskBtn>
        <div className="w-[2px] shrink-0" />
        <TaskBtn pressed><LogoBull s={36} /></TaskBtn>
        <div className="w-[2px] shrink-0" />
        <TaskBtn>
          <Ico s={32} box={32} crisp={false}>
            <path d="M2 19c0-7 8-11 15-10 7 1 10 5 9 9-1 3-5 2-7 3-2 1 0 3-2 5-3 2-15 1-15-7z" fill="#dfe9ee" stroke="#8aa" />
            <circle cx="9" cy="15" r="2" fill="#d94a3a" /><circle cx="14" cy="12" r="2" fill="#e8c030" /><circle cx="7" cy="21" r="2" fill="#49b04a" /><circle cx="12" cy="24" r="2" fill="#3d8fd8" />
            <path d="M16 20L27 6l3 2-10 14z" fill="#e8a040" stroke="#a86820" />
            <path d="M26 6l3-4 2 1-1 5z" fill="#8a5a2a" />
          </Ico>
        </TaskBtn>
        <div className="flex-1" />
        <span className="text-[12px] mr-[5px] tracking-[0.5px]">ES</span>
        <div className="w-[2px] h-[22px] border-l border-l-[#808080] border-r border-r-white mr-[2px]" />
        <div className={`${thinSunken} w-[206px] h-[37px] flex items-center pl-[3px]`}>
          <Ico s={12}><path d="M3 4l4-3 4 3M3 9l4-3 4 3" fill="none" stroke="#000" strokeWidth="2" /></Ico>
          <div className="ml-[7px]">
            <Ico s={18} box={18} crisp={false}><path d="M2 17V2h9l3 2v6H4v7z" fill="#e8e8e8" stroke="#808080" /><circle cx="12" cy="12" r="5" fill="#e03030" /><path d="M10 10l4 4M14 10l-4 4" stroke="#fff" strokeWidth="1.200" /></Ico>
          </div>
          <div className="ml-[4px]">
            <Ico s={18} box={18} crisp={false}><rect x="3" y="2" width="9" height="14" fill="#505050" /><path d="M11 6h3V3h1v3h2v2h-2v2c0 2-2 2-4 2z" fill="#fff" stroke="#606060" /><path d="M3 10l7 7M10 10l-7 7" stroke="#e00000" strokeWidth="2" /></Ico>
          </div>
          <div className="ml-[7px]">
            <Ico s={18} box={18}><path d="M1 14h2v2H1zM5 11h2v5H5zM9 8h2v8H9zM13 5h2v11h-2z" fill="#e8e8e8" stroke="#808080" /></Ico>
          </div>
          <div className="ml-[7px]">
            <Ico s={18} box={18} crisp={false}><path d="M2 7h3l5-4v12l-5-4H2z" fill="#e8e8e8" stroke="#808080" /><path d="M12 6c1.500 2 1.500 4 0 6" fill="none" stroke="#b0b0b0" /></Ico>
          </div>
          <div className="w-[78px] flex flex-col items-center gap-[5px] ml-[7px] text-[12px]">
            <span>18:11</span>
            <span className="whitespace-nowrap">29/04/2016</span>
          </div>
          <div className="ml-[5px]">
            <Ico s={17} box={17}><rect x="1" y="3" width="15" height="9" fill="#2a6fb8" stroke="#506070" /><rect x="1" y="12" width="15" height="2" fill="#405060" /></Ico>
          </div>
        </div>
      </div>
    </div>
  );
};

export default App;
